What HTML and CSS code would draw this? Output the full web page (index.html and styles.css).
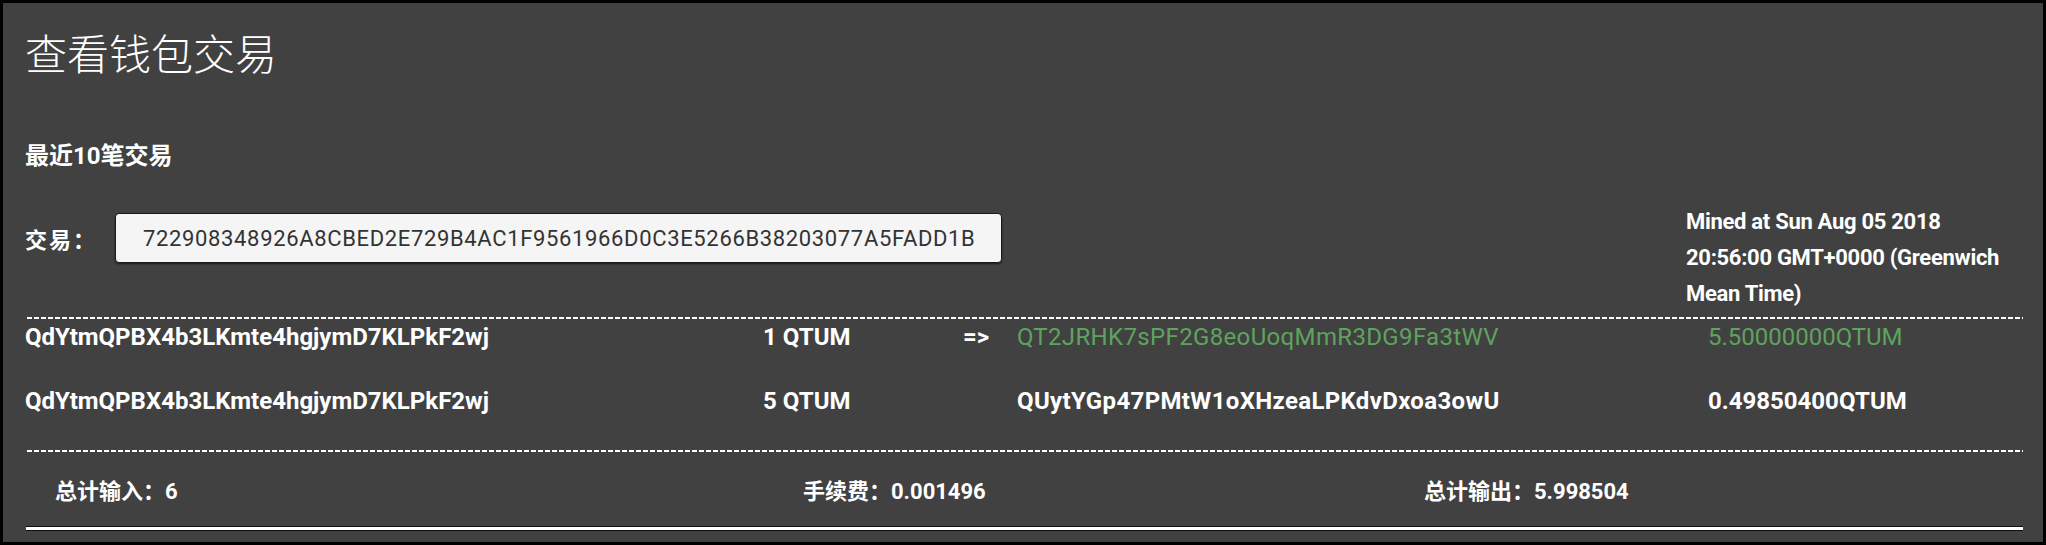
FILE: index.html
```html
<!DOCTYPE html>
<html lang="zh-CN">
<head>
<meta charset="utf-8">
<title>查看钱包交易</title>
<link rel="stylesheet" href="styles.css">
</head>
<body>
<div class="panel">
  <h1 class="title">查看钱包交易</h1>
  <h2 class="subtitle">最近10笔交易</h2>
  <div class="tx-head">
    <div class="tx-id">
      <span class="tx-label">交易：</span>
      <div class="tx-box">722908348926A8CBED2E729B4AC1F9561966D0C3E5266B38203077A5FADD1B</div>
    </div>
    <div class="mined">Mined at Sun Aug 05 2018 20:56:00 GMT+0000 (Greenwich Mean Time)</div>
  </div>
  <div class="dashed dashed-top"></div>
  <div class="rows">
    <div class="row">
      <span class="c-in">QdYtmQPBX4b3LKmte4hgjymD7KLPkF2wj</span>
      <span class="c-amt">1 QTUM</span>
      <span class="c-arrow">=&gt;</span>
      <span class="c-out green">QT2JRHK7sPF2G8eoUoqMmR3DG9Fa3tWV</span>
      <span class="c-val green">5.50000000QTUM</span>
    </div>
    <div class="row">
      <span class="c-in">QdYtmQPBX4b3LKmte4hgjymD7KLPkF2wj</span>
      <span class="c-amt">5 QTUM</span>
      <span class="c-arrow"></span>
      <span class="c-out">QUytYGp47PMtW1oXHzeaLPKdvDxoa3owU</span>
      <span class="c-val">0.49850400QTUM</span>
    </div>
  </div>
  <div class="dashed"></div>
  <div class="totals">
    <span class="t-in">总计输入：6</span>
    <span class="t-fee">手续费：0.001496</span>
    <span class="t-out">总计输出：5.998504</span>
  </div>
  <div class="double-line"></div>
</div>
</body>
</html>
```

FILE: styles.css
```css
html, body {
  margin: 0;
  padding: 0;
  background: #000;
}
body {
  width: 2046px;
  height: 545px;
  overflow: hidden;
  font-family: Roboto, "Noto Sans CJK SC", sans-serif;
  color: #fff;
}
.panel {
  margin: 3px;
  height: 539px;
  box-sizing: border-box;
  background: #414141;
  padding: 0 20px 0 22px;
  display: flex;
  flex-direction: column;
}
.title {
  margin: 25px 0 0 0;
  font-family: "Noto Sans CJK SC", sans-serif;
  font-weight: 300;
  font-size: 42px;
  line-height: 48px;
}
.subtitle {
  margin: 65px 0 0 0;
  font-family: Roboto, "Noto Sans CJK SC", sans-serif;
  font-weight: 700;
  font-size: 24px;
  line-height: 30px;
}
.tx-head {
  display: flex;
  align-items: flex-start;
  padding-bottom: 2px;
}
.tx-id {
  display: flex;
  align-items: center;
  margin-top: 42px;
}
.tx-label {
  font-family: "Noto Sans CJK SC", sans-serif;
  font-weight: 700;
  font-size: 22px;
  letter-spacing: 2px;
  width: 90px;
}
.tx-box {
  width: 887px;
  height: 50px;
  box-sizing: border-box;
  background: #f5f5f5;
  border: 1px solid #1a1a1a;
  border-radius: 4px;
  box-shadow: 0 1px 2px rgba(0,0,0,0.6);
  color: #333;
  font-family: Roboto, sans-serif;
  font-size: 22px;
  letter-spacing: 0.65px;
  display: flex;
  align-items: center;
  padding-left: 27px;
}
.mined {
  margin-left: auto;
  margin-right: 12px;
  width: 325px;
  margin-top: 33px;
  font-weight: 700;
  font-size: 22px;
  letter-spacing: -0.3px;
  line-height: 36px;
}
.dashed {
  height: 2px;
  margin-left: 2px;
  flex: none;
  background: repeating-linear-gradient(90deg, #fff 0 5px, transparent 5px 7px);
}
.dashed-top {
  margin-top: 3px;
}
.rows {
  display: flex;
  flex-direction: column;
  gap: 28px;
  padding-bottom: 31px;
}
.row {
  display: grid;
  grid-template-columns: 738px 200px 54px 691px 1fr;
  height: 36px;
  align-items: center;
  font-weight: 700;
  font-size: 24px;
  white-space: nowrap;
}
.c-out {
  letter-spacing: 0.35px;
}
.green {
  color: #5ea35e;
  font-weight: 400;
}
.totals {
  display: grid;
  grid-template-columns: 748px 621px 1fr;
  padding-left: 30px;
  height: 74px;
  flex: none;
  align-items: center;
  font-weight: 700;
  font-size: 22px;
  font-family: Roboto, "Noto Sans CJK SC", sans-serif;
}
.double-line {
  height: 3px;
  flex: none;
  margin-left: 1px;
  background: #fff;
  border-top: 1px solid #111;
  border-bottom: 1px solid #111;
}
```
